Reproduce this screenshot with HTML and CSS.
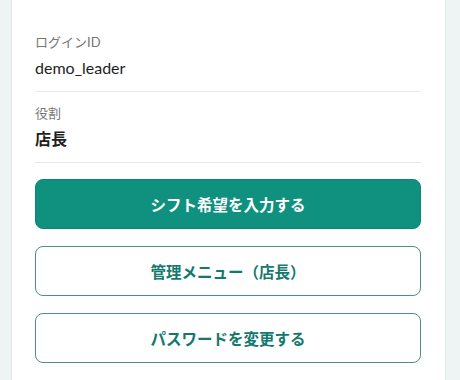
FILE: index.html
```html
<!DOCTYPE html>
<html lang="ja">
<head>
    <meta charset="UTF-8">
    <meta name="viewport" content="width=device-width, initial-scale=1.0">
    <title>マイページ</title>
    <link rel="stylesheet" href="styles.css">
</head>
<body>
    <div class="card">
        <!-- Account info -->
        <div class="info-row">
            <div class="info-label">ログインID</div>
            <div class="info-value">demo_leader</div>
        </div>
        <div class="info-row">
            <div class="info-label">役割</div>
            <div class="info-value strong">店長</div>
        </div>

        <!-- Actions -->
        <div class="actions">
            <button class="btn btn-primary">シフト希望を入力する</button>
            <button class="btn btn-outline">管理メニュー（店長）</button>
            <button class="btn btn-outline">パスワードを変更する</button>
        </div>
    </div>
</body>
</html>
```

FILE: styles.css
```css
body {
    margin: 0;
    background-color: #eef3f3;
    font-family: Lato, "Noto Sans CJK JP", sans-serif;
    color: #222;
    overflow: hidden;
}

.card {
    box-sizing: border-box;
    margin-left: 11px;
    width: 435px;
    min-height: 100vh;
    padding: 33px 24px 0 23px;
    background-color: #fff;
    border-left: 1px solid #dfe7e7;
    border-right: 1px solid #dfe7e7;
}

.info-row {
    padding: 12px 0;
    border-bottom: 1px solid #e4e9e9;
}

.info-row:first-child {
    padding-top: 0;
}

.info-label {
    font-size: 13px;
    line-height: 18px;
    color: #777;
}

.info-value {
    margin-top: 6px;
    font-size: 16px;
    line-height: 22px;
    color: #1e1e1e;
}

.info-value.strong {
    font-weight: bold;
}

.actions {
    display: flex;
    flex-direction: column;
    gap: 17px;
    margin-top: 16px;
}

.btn {
    height: 50px;
    border-radius: 8px;
    font-family: inherit;
    font-size: 15.5px;
    font-weight: bold;
    cursor: pointer;
}

.btn-primary {
    background-color: #10917f;
    border: 1px solid #0e8475;
    color: #fff;
}

.btn-outline {
    background-color: #fff;
    border: 1px solid #4d8e89;
    color: #13796f;
}
```
